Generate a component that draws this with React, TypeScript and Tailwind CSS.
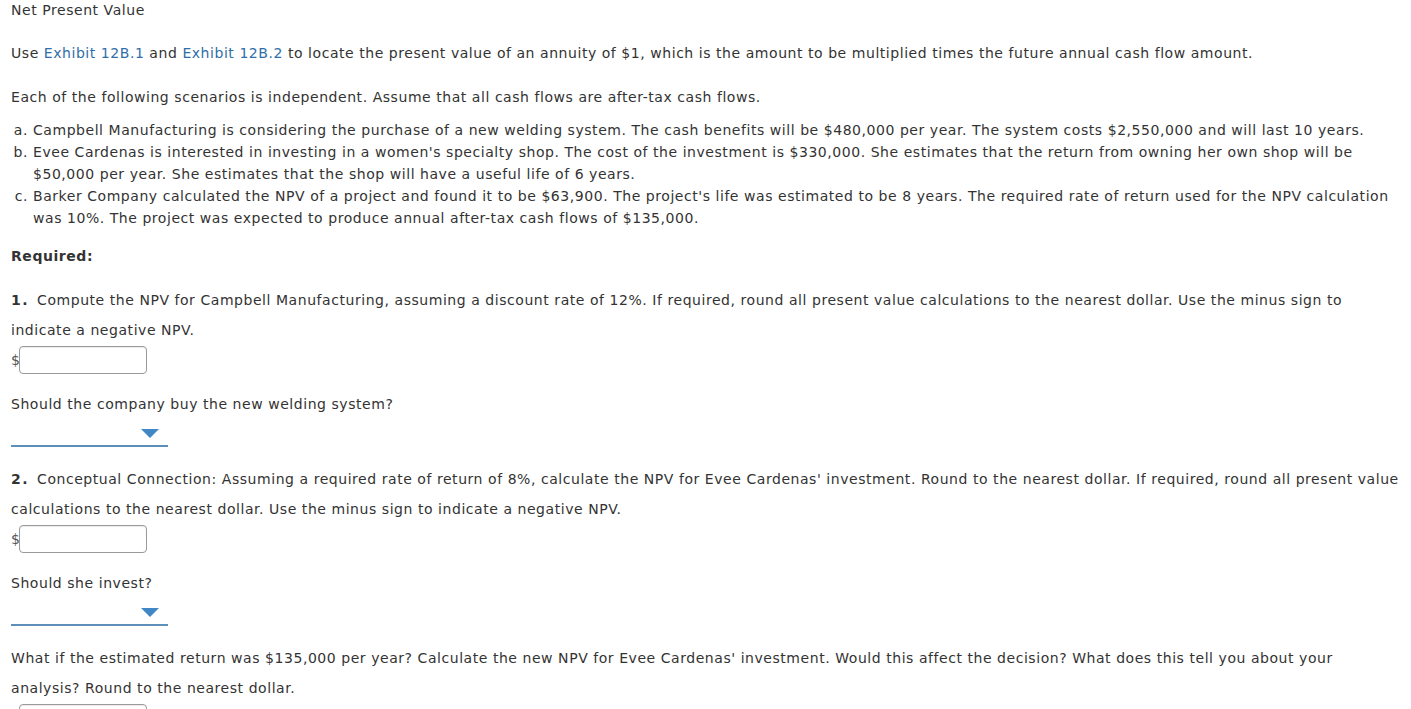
import React from "react";

function MoneyInput({ className = "" }: { className?: string }) {
  return (
    <div className={"flex items-center h-[28px] " + className}>
      <span className="w-[8px] text-[14px] leading-[20px] tracking-normal text-[#555]">$</span>
      <div className="w-[128px] h-[28px] border border-[#9a9a9a] rounded-[4px] bg-white shadow-[inset_0_1px_1px_rgba(0,0,0,0.08)]" />
    </div>
  );
}

function Dropdown({ className = "" }: { className?: string }) {
  return (
    <div className={"relative w-[157px] h-[33px] border-b-2 border-[#5d8fb9] " + className}>
      <svg
        className="absolute right-[9px] top-[15px]"
        width="18"
        height="9"
        viewBox="0 0 18 9"
      >
        <polygon points="0,0 18,0 9,9" fill="#3f87c5" />
      </svg>
    </div>
  );
}

export default function App() {
  return (
    <div
      className="bg-white text-[#333] text-[14px] tracking-[0.55px] pl-[11px] pr-[8px] w-[1411px] h-[709px] overflow-hidden"
      style={{ fontFamily: "Verdana, 'DejaVu Sans', sans-serif" }}
    >
      <div className="leading-[20px]">Net Present Value</div>
      <p className="leading-[20px] mt-[23px]">
        Use <span className="text-[#2f6ea8]">Exhibit 12B.1</span> and{" "}
        <span className="text-[#2f6ea8]">Exhibit 12B.2</span> to locate the present value of an annuity of $1, which is the amount to be multiplied times the future annual cash flow amount.
      </p>
      <p className="leading-[20px] mt-[24px]">
        Each of the following scenarios is independent. Assume that all cash flows are after-tax cash flows.
      </p>
      <ol className="list-[lower-alpha] pl-[22px] mt-[12px] leading-[22px]">
        <li>
          Campbell Manufacturing is considering the purchase of a new welding system. The cash benefits will be $480,000 per year. The system costs $2,550,000 and will last 10 years.
        </li>
        <li>
          Evee Cardenas is interested in investing in a women's specialty shop. The cost of the investment is $330,000. She estimates that the return from owning her own shop will be $50,000 per year. She estimates that the shop will have a useful life of 6 years.
        </li>
        <li>
          Barker Company calculated the NPV of a project and found it to be $63,900. The project's life was estimated to be 8 years. The required rate of return used for the NPV calculation was 10%. The project was expected to produce annual after-tax cash flows of $135,000.
        </li>
      </ol>
      <p className="leading-[20px] mt-[17px] font-bold">Required:</p>
      <p className="leading-[30px] mt-[19px]">
        <b className="tracking-[1.5px] mr-[3px]">1.</b> Compute the NPV for Campbell Manufacturing, assuming a discount rate of 12%. If required, round all present value calculations to the nearest dollar. Use the minus sign to indicate a negative NPV.
      </p>
      <MoneyInput className="mt-[1px]" />
      <p className="leading-[20px] mt-[20px]">Should the company buy the new welding system?</p>
      <Dropdown />
      <p className="leading-[30px] mt-[17px]">
        <b className="tracking-[1.5px] mr-[3px]">2.</b> Conceptual Connection: Assuming a required rate of return of 8%, calculate the NPV for Evee Cardenas' investment. Round to the nearest dollar. If required, round all present value calculations to the nearest dollar. Use the minus sign to indicate a negative NPV.
      </p>
      <MoneyInput className="mt-[1px]" />
      <p className="leading-[20px] mt-[20px]">Should she invest?</p>
      <Dropdown />
      <p className="leading-[30px] mt-[17px]">
        What if the estimated return was $135,000 per year? Calculate the new NPV for Evee Cardenas' investment. Would this affect the decision? What does this tell you about your analysis? Round to the nearest dollar.
      </p>
      <MoneyInput className="mt-[1px]" />
    </div>
  );
}
